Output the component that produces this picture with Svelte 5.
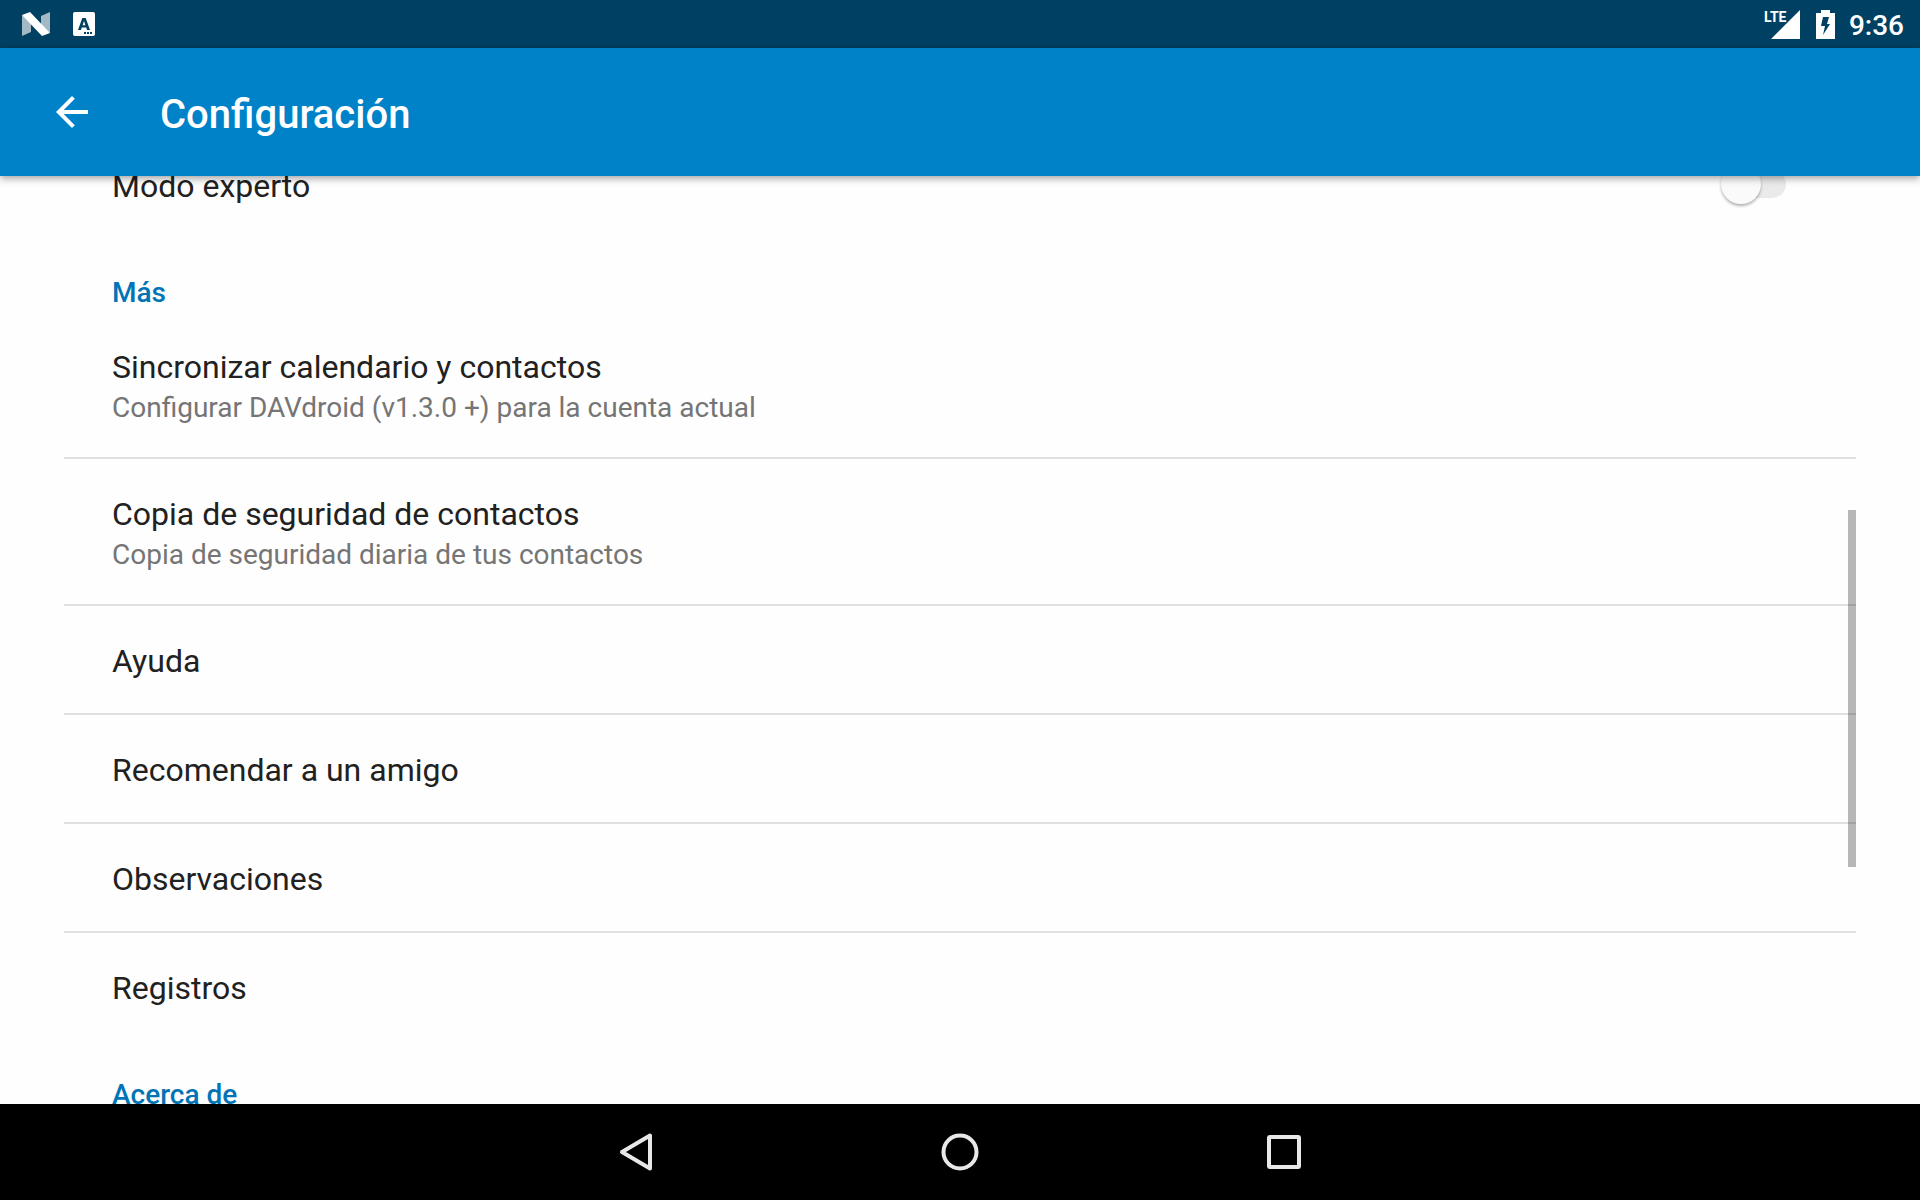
<script>
  let expert = $state(false);

  const rows = [
    {
      title: 'Sincronizar calendario y contactos',
      summary: 'Configurar DAVdroid (v1.3.0 +) para la cuenta actual',
    },
    {
      title: 'Copia de seguridad de contactos',
      summary: 'Copia de seguridad diaria de tus contactos',
    },
    { title: 'Ayuda' },
    { title: 'Recomendar a un amigo' },
    { title: 'Observaciones' },
    { title: 'Registros' },
  ];
</script>

<div class="screen">
  <div class="status">
    <div class="group notices">
      <svg width="28" height="24" viewBox="0 0 28 24" aria-hidden="true">
        <path d="M0 3 9 7V20L0 24ZM28 0 19 4V17L28 21Z" fill="#a3b9c6" />
        <path d="M0 3 8 0 28 21 20 24Z" fill="#fff" />
      </svg>
      <svg width="22" height="24" viewBox="0 0 22 24" aria-hidden="true">
        <rect width="22" height="24" rx="2" fill="#fff" />
        <path d="M5 18 9.300 6h3.400L17 18h-3l-.8-2.400H8.800L8 18ZM9.600 13.200h2.800L11 9Z" fill="#004163" fill-rule="evenodd" />
        <path d="M11 20h2v2h-2zM14 20h2v2h-2zM17 20h2v2h-2z" fill="#004163" />
      </svg>
    </div>
    <div class="group">
      <div class="signal">
        <span class="lte">LTE</span>
        <svg width="29" height="29" viewBox="0 0 29 29" aria-hidden="true">
          <path d="M29 0V29H0Z" fill="#fff" />
        </svg>
      </div>
      <svg class="battery" width="19" height="29" viewBox="0 0 19 29" aria-hidden="true">
        <path d="M5 0h9v3h5v26H0V3h5Z" fill="#fff" />
        <path d="M7 7h6l-2 7h3L7 25l2-9H5Z" fill="#004163" />
      </svg>
      <time class="clock">9:36</time>
    </div>
  </div>

  <header class="toolbar">
    <button class="back" type="button" aria-label="Atrás">
      <svg width="32" height="32" viewBox="4 4 16 16" aria-hidden="true">
        <path d="M20 11H7.830l5.590-5.590L12 4l-8 8 8 8 1.410-1.410L7.830 13H20v-2z" fill="#fff" />
      </svg>
    </button>
    <h1>Configuración</h1>
  </header>

  <main>
    <div class="list">
      <label class="row expert">
        <span class="title">Modo experto</span>
        <input type="checkbox" role="switch" bind:checked={expert} />
      </label>

      <h2>Más</h2>
      <ul>
        {#each rows as row}
          <li>
            <button class="row" type="button">
              <span class="title">{row.title}</span>
              {#if row.summary}<span class="summary">{row.summary}</span>{/if}
            </button>
          </li>
        {/each}
      </ul>
      <h2>Acerca de</h2>
    </div>
    <div class="thumb"></div>
  </main>

  <nav>
    <button type="button" aria-label="Atrás">
      <svg width="48" height="48" viewBox="0 0 48 48" aria-hidden="true">
        <path d="M38 7.500V40.500L10 24Z" />
      </svg>
    </button>
    <button type="button" aria-label="Inicio">
      <svg width="48" height="48" viewBox="0 0 48 48" aria-hidden="true">
        <circle cx="24" cy="24" r="16.500" />
      </svg>
    </button>
    <button type="button" aria-label="Recientes">
      <svg width="48" height="48" viewBox="0 0 48 48" aria-hidden="true">
        <rect x="9" y="9" width="30" height="30" rx="1" />
      </svg>
    </button>
  </nav>
</div>

<style>
  :global(body) {
    margin: 0;
    font-family: Roboto, 'Noto Sans', sans-serif;
  }

  .screen {
    display: flex;
    flex-direction: column;
    height: 100vh;
    overflow: hidden;
    background: #fefefe;
  }

  button {
    margin: 0;
    padding: 0;
    border: 0;
    background: none;
    color: inherit;
    font: inherit;
    text-align: left;
    cursor: pointer;
  }

  svg {
    display: block;
  }

  .status {
    flex: none;
    display: flex;
    align-items: center;
    justify-content: space-between;
    height: 48px;
    padding: 0 16px 0 22px;
    background: #004163;
    color: #fff;
  }

  .group {
    display: flex;
    align-items: center;
  }

  .notices {
    gap: 23px;
  }

  .signal {
    position: relative;
    padding-left: 7px;
  }

  .lte {
    position: absolute;
    left: 0;
    top: 0;
    font: 700 14px/14px 'Liberation Sans Narrow', Roboto, sans-serif;
  }

  .battery {
    margin: 0 14px 0 16px;
  }

  .clock {
    padding-top: 3px;
    font-size: 28px;
    font-weight: 500;
    line-height: 32px;
  }

  .toolbar {
    position: relative;
    z-index: 1;
    flex: none;
    display: flex;
    align-items: center;
    height: 128px;
    background: #0082c9;
    box-shadow: 0 2px 8px rgba(0, 0, 0, 0.4);
    color: #fff;
  }

  .back {
    display: grid;
    place-items: center;
    width: 112px;
    height: 112px;
    padding-left: 32px;
    box-sizing: border-box;
  }

  h1 {
    margin: 0 0 0 48px;
    padding-top: 5px;
    font-size: 40px;
    font-weight: 500;
    line-height: 48px;
  }

  main {
    position: relative;
    flex: 1;
    min-height: 0;
    overflow: hidden;
    padding: 0 64px;
  }

  .list {
    margin-top: -45px;
  }

  .row {
    display: flex;
    flex-direction: column;
    width: 100%;
    box-sizing: border-box;
    padding: 34px 48px 30px;
  }

  .expert {
    flex-direction: row;
    align-items: flex-start;
    justify-content: space-between;
    padding-right: 70px;
  }

  .title {
    color: #212121;
    font-size: 32px;
    line-height: 43px;
  }

  .summary {
    color: #757575;
    font-size: 28px;
    line-height: 38px;
  }

  input {
    appearance: none;
    position: relative;
    width: 62px;
    height: 28px;
    margin: 5px 0 0;
    border-radius: 14px;
    background: #eaeaea;
  }

  input::before {
    content: '';
    position: absolute;
    left: -3px;
    top: -6px;
    width: 40px;
    height: 40px;
    border-radius: 50%;
    background: #fafafa;
    box-shadow: 0 2px 3px rgba(0, 0, 0, 0.3);
  }

  input:checked::before {
    left: 25px;
    background: #0082c9;
  }

  h2 {
    margin: 0;
    padding: 36px 48px 0;
    color: #0074b4;
    font-size: 28px;
    font-weight: 500;
    line-height: 38px;
  }

  ul {
    margin: 0;
    padding: 0;
    list-style: none;
  }

  li + li {
    border-top: 2px solid #e0e0e0;
  }

  .thumb {
    position: absolute;
    right: 64px;
    top: 36%;
    width: 8px;
    height: 357px;
    background: rgba(0, 0, 0, 0.28);
  }

  nav {
    flex: none;
    display: flex;
    align-items: center;
    justify-content: center;
    gap: 276px;
    height: 96px;
    background: #000;
  }

  nav svg {
    fill: none;
    stroke: #e8e8e8;
    stroke-width: 4;
    stroke-linejoin: round;
  }
</style>
